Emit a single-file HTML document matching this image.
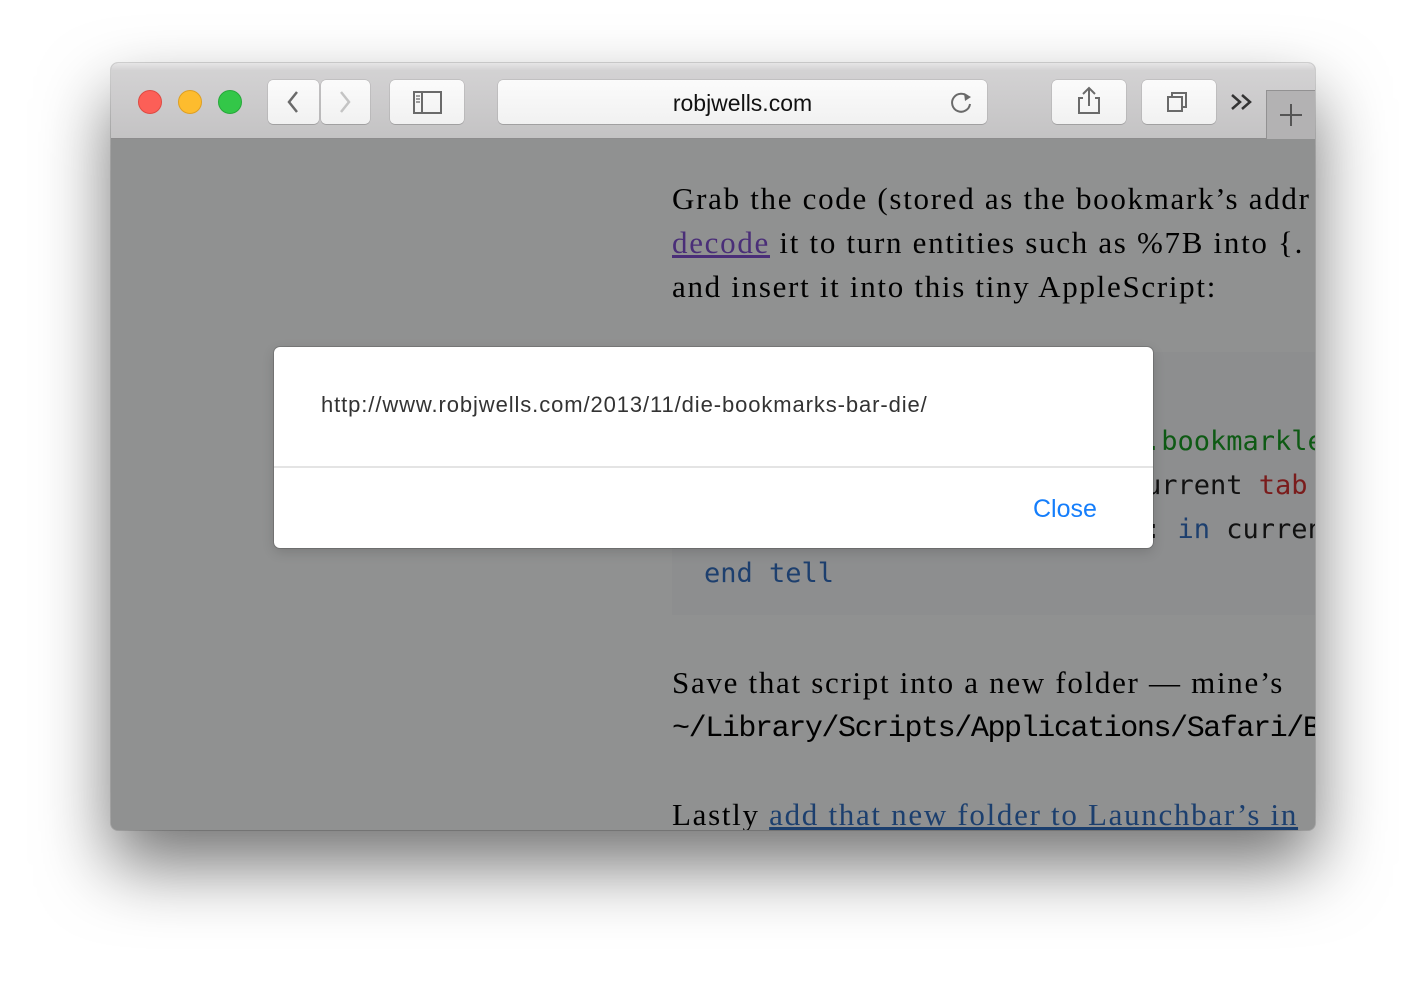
<!DOCTYPE html>
<html><head><meta charset="utf-8"><style>
*{margin:0;padding:0;box-sizing:border-box}
body{width:1426px;height:990px;background:#fff;position:relative;overflow:hidden;font-family:"Liberation Sans",sans-serif}
.win{position:absolute;left:111px;top:63px;width:1204px;height:767px;border-radius:7px;overflow:hidden;box-shadow:0 35px 70px rgba(0,0,0,.55),0 0 0 1px rgba(0,0,0,.15);background:#909191}
.tb{position:absolute;left:0;top:0;width:1204px;height:76px;background:linear-gradient(#e6e5e6,#d3d2d3 10%,#c4c3c4);border-bottom:1px solid #8d8c8d}
.dot{position:absolute;top:27px;width:24px;height:24px;border-radius:50%}
.btn{position:absolute;top:17px;height:44px;background:linear-gradient(#fbfbfb,#f1f1f1);border-radius:5px;box-shadow:0 1px 0 rgba(0,0,0,.12),0 0 0 .5px rgba(0,0,0,.15)}
.serif{font-family:"Liberation Serif",serif;font-size:31px;letter-spacing:1.7px;color:#000;position:absolute;left:561px;white-space:nowrap;line-height:44px}
.mono{font-family:"DejaVu Sans Mono","Liberation Mono",monospace;font-size:27px;position:absolute;white-space:nowrap;line-height:44px}
</style></head><body>
<div class="win">
 <div class="tb">
  <div class="dot" style="left:27px;background:#fc5f57;border:1px solid #de4a42"></div>
  <div class="dot" style="left:67px;background:#fdbc2e;border:1px solid #de9f22"></div>
  <div class="dot" style="left:107px;background:#33c748;border:1px solid #27a83a"></div>
  <div class="btn" style="left:157px;width:51px"><svg width="51" height="44"><path d="M29 12 L21 22 L29 32" fill="none" stroke="#6a6a6a" stroke-width="2.5"/></svg></div>
  <div class="btn" style="left:210px;width:49px"><svg width="49" height="44"><path d="M20 12 L28 22 L20 32" fill="none" stroke="#c4c4c4" stroke-width="2.5"/></svg></div>
  <div class="btn" style="left:279px;width:74px"><svg width="74" height="44"><rect x="24" y="12" width="27" height="21" fill="none" stroke="#6a6a6a" stroke-width="2"/><line x1="32" y1="12" x2="32" y2="33" stroke="#6a6a6a" stroke-width="2"/><path d="M26 16h4M26 19h4M26 22h4" stroke="#6a6a6a" stroke-width="1.3"/></svg></div>
  <div class="btn" style="left:387px;width:489px;font-size:23px;color:#111;text-align:center;line-height:46px">robjwells.com<svg style="position:absolute;right:12px;top:9px" width="26" height="26"><path d="M19 8 A9 9 0 1 0 21 15" fill="none" stroke="#6a6a6a" stroke-width="2"/><path d="M15 4 L22 8 L16 12 Z" fill="#6a6a6a"/></svg></div>
  <div class="btn" style="left:941px;width:74px"><svg width="74" height="44"><path d="M31 18h-4v15h20v-15h-4" fill="none" stroke="#6a6a6a" stroke-width="2"/><path d="M37 26V8M31 14l6-6 6 6" fill="none" stroke="#6a6a6a" stroke-width="2"/></svg></div>
  <div class="btn" style="left:1031px;width:74px"><svg width="74" height="44"><rect x="26" y="17" width="14" height="14" fill="none" stroke="#6a6a6a" stroke-width="2"/><path d="M30 17v-4h14v14h-4" fill="none" stroke="#6a6a6a" stroke-width="2"/></svg></div>
  <svg style="position:absolute;left:1118px;top:28px" width="26" height="22"><path d="M3 4l8 7-8 7M13 4l8 7-8 7" fill="none" stroke="#333" stroke-width="2.5"/></svg>
  <div style="position:absolute;left:1155px;top:27px;width:49px;height:49px;background:#b3b2b3;border-left:1px solid #929192;border-top:1px solid #929192"><svg width="49" height="49"><path d="M24 13v22M13 24h22" stroke="#555" stroke-width="2"/></svg></div>
 </div>
 <div style="position:absolute;left:0;top:77px;width:1204px;height:690px;background:#909191">
  <div class="serif" style="top:37px">Grab the code (stored as the bookmark’s addr</div>
  <div class="serif" style="top:81px"><span style="color:#4a2e78;text-decoration:underline">decode</span> it to turn entities such as <span style="font-family:'Liberation Serif',serif">%7B</span> into {.</div>
  <div class="serif" style="top:125px">and insert it into this tiny AppleScript:</div>
  <div style="position:absolute;left:561px;top:212px;width:643px;height:263px;background:#8d8e8f"></div>
  <div class="mono" style="left:1034px;top:280px;color:#0e5a14">.bookmarklet</div>
  <div class="mono" style="left:1034px;top:324px;color:#111">urrent <span style="color:#7a1c1c">tab</span></div>
  <div class="mono" style="left:1034px;top:368px;color:#111">: <span style="color:#1d3f6e">in</span> curren</div>
  <div class="mono" style="left:593px;top:412px;color:#1d3f6e">end tell</div>
  <div class="serif" style="top:521px">Save that script into a new folder — mine’s</div>
  <div class="mono" style="left:561px;top:567px;color:#000;font-family:'Liberation Mono',monospace;font-size:30px;letter-spacing:-1.4px">~/Library/Scripts/Applications/Safari/B</div>
  <div class="serif" style="top:653px">Lastly <span style="color:#1c3f6e;text-decoration:underline">add that new folder to Launchbar’s in</span></div>
 </div>
</div>
<div style="position:absolute;left:274px;top:347px;width:879px;height:201px;background:#fff;border-radius:6px;box-shadow:0 0 0 1px rgba(0,0,0,.15),0 4px 12px rgba(0,0,0,.15)">
 <div style="position:absolute;left:47px;top:45px;font-size:22px;color:#333;letter-spacing:0.9px">http://www.robjwells.com/2013/11/die-bookmarks-bar-die/</div>
 <div style="position:absolute;left:0;top:119px;width:879px;height:2px;background:#e4e4e4"></div>
 <div style="position:absolute;left:759px;top:148px;font-size:25px;color:#157efb">Close</div>
</div>
</body></html>
